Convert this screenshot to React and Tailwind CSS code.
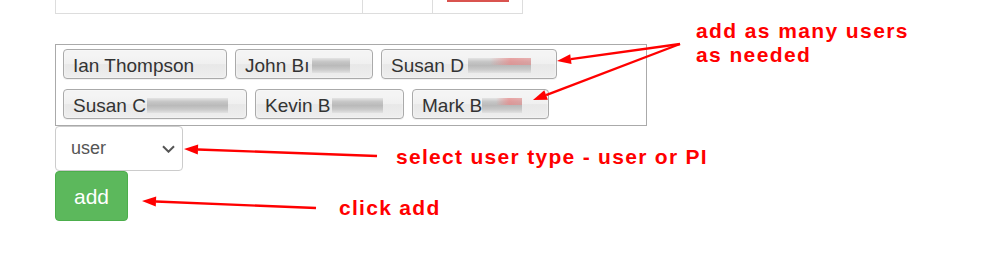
import React from "react";

const people = [
  [
    { name: "Ian Thompson", w: "w-[164px]" },
    { name: "John B\u0131", w: "w-[138px]", blur: "w-[38px]", gap: "ml-[3px]" },
    { name: "Susan D", w: "w-[176px]", blur: "w-[63px]", gap: "ml-[4px]", red: true },
  ],
  [
    { name: "Susan C", w: "w-[184px]", blur: "w-[81px]", gap: "ml-[1px]" },
    { name: "Kevin B", w: "w-[149px]", blur: "w-[51px]", gap: "ml-[2px]" },
    { name: "Mark B", w: "w-[137px]", blur: "w-[40px]", gap: "ml-[0px]", red: true },
  ],
];

const arrows = [
  [680, 44, 557, 61],
  [680, 44, 533, 100],
  [377, 156, 184, 149],
  [316, 208, 142, 201],
];

function Arrow({ x1, y1, x2, y2 }) {
  const dx = x2 - x1;
  const dy = y2 - y1;
  const len = Math.hypot(dx, dy);
  const ux = dx / len;
  const uy = dy / len;
  const bx = x2 - ux * 14;
  const by = y2 - uy * 14;
  const px = -uy * 5;
  const py = ux * 5;
  return (
    <g>
      <line x1={x1} y1={y1} x2={bx} y2={by} stroke="#ff0000" strokeWidth="2.4" />
      <polygon
        points={`${x2},${y2} ${bx + px},${by + py} ${bx - px},${by - py}`}
        fill="#ff0000"
      />
    </g>
  );
}

// blurred-out surname
function Smudge({ w, gap, red }) {
  return (
    <span
      className={`relative inline-block h-[15px] blur-[0.5px] bg-[linear-gradient(to_bottom,#e4e4e4,#c6c6c6_25%,#bababa_50%,#c8c8c8_75%,#e2e2e2)] ${w} ${gap}`}
    >
      {red && (
        <span className="absolute right-0 top-0 w-[65%] h-[7px] bg-[linear-gradient(to_right,rgba(236,140,140,0),rgba(236,130,130,0.65)_50%,rgba(236,130,130,0.5))]" />
      )}
    </span>
  );
}

function Chip({ person }) {
  return (
    <div
      className={`${person.w} h-[30px] flex items-center pl-[9px] pt-[2px] border border-[#aaaaaa] rounded-[4px] bg-[linear-gradient(to_bottom,#f4f4f4_20%,#f0f0f0_50%,#e8e8e8_52%,#eeeeee_100%)] shadow-[inset_0_0_2px_#fff,0_1px_0_rgba(0,0,0,0.05)] text-[19px] text-[#333] leading-none whitespace-nowrap`}
    >
      <span>{person.name}</span>
      {person.blur && <Smudge w={person.blur} gap={person.gap} red={person.red} />}
    </div>
  );
}

export default function App() {
  return (
    <div className="relative w-[996px] h-[270px] overflow-hidden bg-white pl-[55px] font-['Liberation_Sans',Arial,sans-serif]">
      {/* table stub cut off at the top */}
      <div className="flex w-[468px] h-[14px] border-x border-b border-[#dddddd]">
        <div className="w-[307px] border-r border-[#dddddd]" />
        <div className="w-[70px] border-r border-[#dddddd]" />
        <div className="flex-1">
          <div className="ml-[14px] w-[62px] h-[2px] bg-[#d9534f]" />
        </div>
      </div>

      {/* user multi-select */}
      <div className="mt-[30px] w-[592px] h-[82px] border border-[#aaaaaa] pl-[7px] pt-[4px] flex flex-col gap-[10px]">
        {people.map((row, i) => (
          <div key={i} className="flex gap-[8px]">
            {row.map((p) => (
              <Chip key={p.name} person={p} />
            ))}
          </div>
        ))}
      </div>

      {/* user type */}
      <div className="w-[128px] h-[45px] border border-[#cccccc] rounded-[4px] bg-white flex items-center justify-between pl-[15px] pr-[7px] text-[18px] text-[#555555]">
        <span>user</span>
        <svg width="13" height="8" viewBox="0 0 13 8" fill="none">
          <path d="M1 1.2l5.5 5.5 5.5-5.5" stroke="#555555" strokeWidth="2" />
        </svg>
      </div>

      <button className="w-[73px] h-[50px] rounded-[4px] bg-[#5cb85c] border border-[#4cae4c] text-white text-[21px] leading-none">
        add
      </button>

      {/* annotations */}
      <svg className="absolute left-0 top-0 pointer-events-none" width="996" height="270">
        {arrows.map(([x1, y1, x2, y2], i) => (
          <Arrow key={i} x1={x1} y1={y1} x2={x2} y2={y2} />
        ))}
      </svg>
      <div className="absolute left-[696px] top-[19px] text-[21px] leading-[24px] font-bold tracking-[1.4px] text-[#ff0000]">
        add as many users
        <br />
        as needed
      </div>
      <div className="absolute left-[396px] top-[145px] text-[21px] leading-[24px] font-bold tracking-[1.3px] text-[#ff0000] whitespace-nowrap">
        select user type - user or PI
      </div>
      <div className="absolute left-[339px] top-[196px] text-[21px] leading-[24px] font-bold tracking-[1.3px] text-[#ff0000] whitespace-nowrap">
        click add
      </div>
    </div>
  );
}
